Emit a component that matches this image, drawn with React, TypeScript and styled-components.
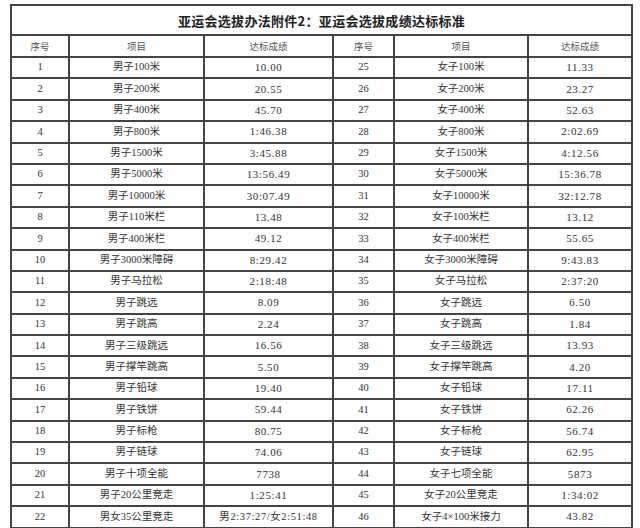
import styled, { createGlobalStyle } from 'styled-components';

const GlobalStyle = createGlobalStyle`
  html, body {
    margin: 0;
    padding: 0;
    background: #ffffff;
    overflow: hidden;
  }
`;

const menEvents = [
  ['1', '男子100米', '10.00'],
  ['2', '男子200米', '20.55'],
  ['3', '男子400米', '45.70'],
  ['4', '男子800米', '1:46.38'],
  ['5', '男子1500米', '3:45.88'],
  ['6', '男子5000米', '13:56.49'],
  ['7', '男子10000米', '30:07.49'],
  ['8', '男子110米栏', '13.48'],
  ['9', '男子400米栏', '49.12'],
  ['10', '男子3000米障碍', '8:29.42'],
  ['11', '男子马拉松', '2:18:48'],
  ['12', '男子跳远', '8.09'],
  ['13', '男子跳高', '2.24'],
  ['14', '男子三级跳远', '16.56'],
  ['15', '男子撑竿跳高', '5.50'],
  ['16', '男子铅球', '19.40'],
  ['17', '男子铁饼', '59.44'],
  ['18', '男子标枪', '80.75'],
  ['19', '男子链球', '74.06'],
  ['20', '男子十项全能', '7738'],
  ['21', '男子20公里竞走', '1:25:41'],
  ['22', '男女35公里竞走', '男2:37:27/女2:51:48'],
];

const womenEvents = [
  ['25', '女子100米', '11.33'],
  ['26', '女子200米', '23.27'],
  ['27', '女子400米', '52.63'],
  ['28', '女子800米', '2:02.69'],
  ['29', '女子1500米', '4:12.56'],
  ['30', '女子5000米', '15:36.78'],
  ['31', '女子10000米', '32:12.78'],
  ['32', '女子100米栏', '13.12'],
  ['33', '女子400米栏', '55.65'],
  ['34', '女子3000米障碍', '9:43.83'],
  ['35', '女子马拉松', '2:37:20'],
  ['36', '女子跳远', '6.50'],
  ['37', '女子跳高', '1.84'],
  ['38', '女子三级跳远', '13.93'],
  ['39', '女子撑竿跳高', '4.20'],
  ['40', '女子铅球', '17.11'],
  ['41', '女子铁饼', '62.26'],
  ['42', '女子标枪', '56.74'],
  ['43', '女子链球', '62.95'],
  ['44', '女子七项全能', '5873'],
  ['45', '女子20公里竞走', '1:34:02'],
  ['46', '女子4×100米接力', '43.82'],
];

const widths = [58, 135, 129, 61, 134, 104];

export default function App() {
  return (
    <>
      <GlobalStyle />
      <Page>
        <Sheet>
          <colgroup>
            {widths.map((w, i) => (
              <col key={i} style={{ width: w }} />
            ))}
          </colgroup>
          <tbody>
            <TitleRow>
              <TitleCell colSpan={6}>亚运会选拔办法附件2：亚运会选拔成绩达标标准</TitleCell>
            </TitleRow>
            <HeadRow>
              <HeadCell>序号</HeadCell>
              <HeadCell>项目</HeadCell>
              <HeadCell>达标成绩</HeadCell>
              <HeadCell>序号</HeadCell>
              <HeadCell>项目</HeadCell>
              <HeadCell>达标成绩</HeadCell>
            </HeadRow>
            {menEvents.map((m, i) => {
              const w = womenEvents[i];
              return (
                <Row key={m[0]}>
                  <Cell>{m[0]}</Cell>
                  <Cell>{m[1]}</Cell>
                  <Score $long={m[2].length > 10}>{m[2]}</Score>
                  <Cell>{w[0]}</Cell>
                  <Cell>{w[1]}</Cell>
                  <Score>{w[2]}</Score>
                </Row>
              );
            })}
            <Row>
              <Cell />
              <Cell />
              <Cell />
              <Cell />
              <Cell />
              <Cell />
            </Row>
          </tbody>
        </Sheet>
      </Page>
    </>
  );
}

const Page = styled.div`
  width: 640px;
  height: 528px;
  overflow: hidden;
  box-sizing: border-box;
  padding: 4px 0 0 10px;
  background: #ffffff;
`;

const Sheet = styled.table`
  width: 622px;
  table-layout: fixed;
  border-collapse: collapse;
  border: 2px solid #333333;
  font-family: 'Liberation Serif', 'Noto Sans CJK SC', serif;
  color: #333333;
  td {
    border: 2px solid #444444;
    padding: 0;
    text-align: center;
    vertical-align: middle;
    white-space: nowrap;
    overflow: hidden;
  }
`;

const TitleRow = styled.tr`
  height: 30px;
`;

const TitleCell = styled.td`
  font-family: 'Noto Sans CJK SC', sans-serif;
  font-weight: 700;
  font-size: 13px;
  color: #222222;
  letter-spacing: 0.3px;
`;

const HeadRow = styled.tr`
  height: 22px;
`;

const HeadCell = styled.td`
  font-family: 'Noto Sans CJK SC', sans-serif;
  font-size: 9.5px;
  color: #555555;
`;

const Row = styled.tr`
  height: 21.4px;
`;

const Cell = styled.td`
  font-size: 10.5px;
  line-height: 1;
`;

const Score = styled(Cell)<{ $long?: boolean }>`
  font-size: ${(p) => (p.$long ? '10.5px' : '11px')};
  letter-spacing: ${(p) => (p.$long ? '0.6px' : '0.6px')};
`;
